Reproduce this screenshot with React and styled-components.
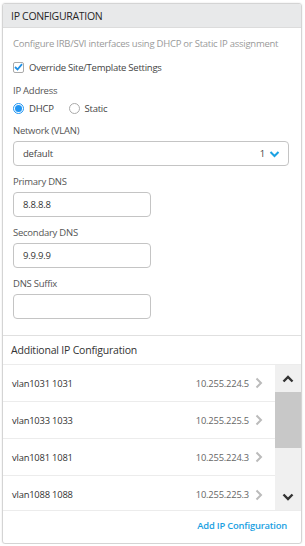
import React from "react";
import styled, { createGlobalStyle } from "styled-components";

const Global = createGlobalStyle`
  html, body { margin: 0; padding: 0; background: #fff; }
  body { font-family: "Open Sans", "Noto Sans", sans-serif; color: #333; }
  * { box-sizing: border-box; }
`;

const Card = styled.div`
  margin: 3px 3px 0 2px;
  width: 300px;
  height: 541px;
  border: 1px solid #d4d4d4;
  border-radius: 3px;
  box-shadow: 0 0 2px rgba(0,0,0,0.12);
  display: flex;
  flex-direction: column;
  overflow: hidden;
`;

const Header = styled.div`
  height: 24px;
  flex-shrink: 0;
  background: #e8e9ea;
  border-bottom: 1px solid #dcdcdc;
  display: flex;
  align-items: center;
  padding-left: 8px;
  font-size: 10.5px;
  color: #262626;
  letter-spacing: -0.3px;
`;

const Body = styled.div`
  padding: 8px 10px 0 10px;
  display: flex;
  flex-direction: column;
`;

const Desc = styled.div`
  font-size: 9.5px;
  color: #9a9a9a;
  line-height: 14px;
  margin-top: 1px;
  letter-spacing: -0.25px;
`;

const Text = styled.span`
  font-size: 9.5px;
  color: #444;
  letter-spacing: -0.25px;
`;

const Row = styled.div`
  display: flex;
  align-items: center;
  gap: 5px;
  margin-top: ${p => p.mt || 0}px;
  height: 14px;
`;

const Label = styled.div`
  font-size: 9.5px;
  color: #555;
  letter-spacing: -0.25px;
  line-height: 14px;
  margin-top: ${p => p.mt}px;
`;

const CheckBox = styled.span`
  width: 11px;
  height: 11px;
  border: 1px solid #aaa;
  border-radius: 2px;
  display: inline-flex;
  align-items: center;
  justify-content: center;
  background: #fff;
`;

const Radio = styled.span`
  width: 11px;
  height: 11px;
  border-radius: 50%;
  border: 1px solid ${p => (p.on ? "#2196f3" : "#aaa")};
  display: inline-flex;
  align-items: center;
  justify-content: center;
  &::after {
    content: "";
    width: 7px;
    height: 7px;
    border-radius: 50%;
    background: ${p => (p.on ? "#2196f3" : "transparent")};
  }
`;

const RadioItem = styled.span`
  display: inline-flex;
  align-items: center;
  gap: 5px;
  margin-right: 10px;
`;

const Select = styled.div`
  margin-top: 3px;
  width: 276px;
  height: 25px;
  border: 1px solid #c4c4c4;
  border-radius: 4px;
  display: flex;
  align-items: center;
  padding: 0 8px 0 9px;
  font-size: 9.5px;
  letter-spacing: -0.2px;
  color: #444;
`;

const Grow = styled.span`
  flex: 1;
`;

const Input = styled.div`
  margin-top: 3px;
  width: 138px;
  height: 25px;
  border: 1px solid #c4c4c4;
  border-radius: 4px;
  display: flex;
  align-items: center;
  padding-left: 9px;
  font-size: 9.5px;
  letter-spacing: -0.2px;
  color: #333;
`;

const Divider = styled.div`
  margin-top: 16px;
  border-top: 1px solid #e0e0e0;
`;

const SubTitle = styled.div`
  height: 29px;
  flex-shrink: 0;
  display: flex;
  align-items: center;
  padding-left: 8px;
  font-size: 10.5px;
  color: #333;
  letter-spacing: -0.2px;
  border-bottom: 1px solid #ececec;
`;

const ListWrap = styled.div`
  display: flex;
  height: 146px;
  flex-shrink: 0;
  border-bottom: 1px solid #ececec;
  overflow: hidden;
`;

const List = styled.div`
  flex: 1;
  display: flex;
  flex-direction: column;
`;

const Item = styled.div`
  height: 37px;
  flex-shrink: 0;
  display: flex;
  align-items: center;
  padding: 0 12px 0 9px;
  border-bottom: ${p => (p.last ? "none" : "1px solid #ececec")};
`;

const Name = styled.span`
  flex: 1;
  font-size: 9.4px;
  color: #333;
  letter-spacing: -0.2px;
`;

const Ip = styled.span`
  font-size: 9.4px;
  color: #666;
  margin-right: 6px;
  letter-spacing: -0.2px;
`;

const ScrollBar = styled.div`
  width: 26px;
  background: #f0f0f0;
  display: flex;
  flex-direction: column;
  align-items: center;
`;

const ScrollBtn = styled.div`
  height: 27px;
  flex-shrink: 0;
  width: 100%;
  display: flex;
  align-items: center;
  justify-content: center;
`;

const Thumb = styled.div`
  width: 100%;
  height: 56px;
  background: #c8c8c8;
`;

const Spacer = styled.div`
  flex: 1;
`;

const Footer = styled.div`
  display: flex;
  justify-content: flex-end;
  padding: 8px 14px 0 0;
`;

const Link = styled.a`
  font-size: 9.4px;
  color: #1ba1e2;
  font-weight: 600;
  letter-spacing: -0.2px;
  text-decoration: none;
`;

const Chevron = () => (
  <svg width="8" height="12" viewBox="0 0 8 12">
    <path d="M1.5 1.5 L6 6 L1.5 10.5" stroke="#bbb" strokeWidth="2" fill="none" />
  </svg>
);

const rows = [
  ["vlan1031 1031", "10.255.224.5"],
  ["vlan1033 1033", "10.255.225.5"],
  ["vlan1081 1081", "10.255.224.3"],
  ["vlan1088 1088", "10.255.225.3"],
];

export default function App() {
  return (
    <>
      <Global />
      <Card>
        <Header>IP CONFIGURATION</Header>
        <Body>
          <Desc>Configure IRB/SVI interfaces using DHCP or Static IP assignment</Desc>
          <Row mt={9}>
            <CheckBox>
              <svg width="9" height="8" viewBox="0 0 9 8">
                <path d="M1 4 L3.5 6.5 L8 1.2" stroke="#1e90e6" strokeWidth="1.8" fill="none" />
              </svg>
            </CheckBox>
            <Text>Override Site/Template Settings</Text>
          </Row>
          <Label mt={10}>IP Address</Label>
          <Row mt={3}>
            <RadioItem>
              <Radio on />
              <Text>DHCP</Text>
            </RadioItem>
            <RadioItem>
              <Radio />
              <Text>Static</Text>
            </RadioItem>
          </Row>
          <Label mt={9}>Network (VLAN)</Label>
          <Select>
            <Grow>default</Grow>
            <span>1</span>
            <svg width="11" height="8" viewBox="0 0 11 8" style={{ marginLeft: 4 }}>
              <path d="M1.5 2 L5.5 6 L9.5 2" stroke="#1ba1e2" strokeWidth="2" fill="none" />
            </svg>
          </Select>
          <Label mt={9}>Primary DNS</Label>
          <Input>8.8.8.8</Input>
          <Label mt={9}>Secondary DNS</Label>
          <Input>9.9.9.9</Input>
          <Label mt={9}>DNS Suffix</Label>
          <Input />
        </Body>
        <Divider />
        <SubTitle>Additional IP Configuration</SubTitle>
        <ListWrap>
          <List>
            {rows.map(([n, ip], i) => (
              <Item key={n} last={i === rows.length - 1}>
                <Name>{n}</Name>
                <Ip>{ip}</Ip>
                <Chevron />
              </Item>
            ))}
          </List>
          <ScrollBar>
            <ScrollBtn>
              <svg width="12" height="8" viewBox="0 0 12 8">
                <path d="M1.5 6.5 L6 2 L10.5 6.5" stroke="#333" strokeWidth="2.4" fill="none" />
              </svg>
            </ScrollBtn>
            <Thumb />
            <Spacer />
            <ScrollBtn>
              <svg width="12" height="8" viewBox="0 0 12 8">
                <path d="M1.5 1.5 L6 6 L10.5 1.5" stroke="#333" strokeWidth="2.4" fill="none" />
              </svg>
            </ScrollBtn>
          </ScrollBar>
        </ListWrap>
        <Footer>
          <Link href="#">Add IP Configuration</Link>
        </Footer>
      </Card>
    </>
  );
}
